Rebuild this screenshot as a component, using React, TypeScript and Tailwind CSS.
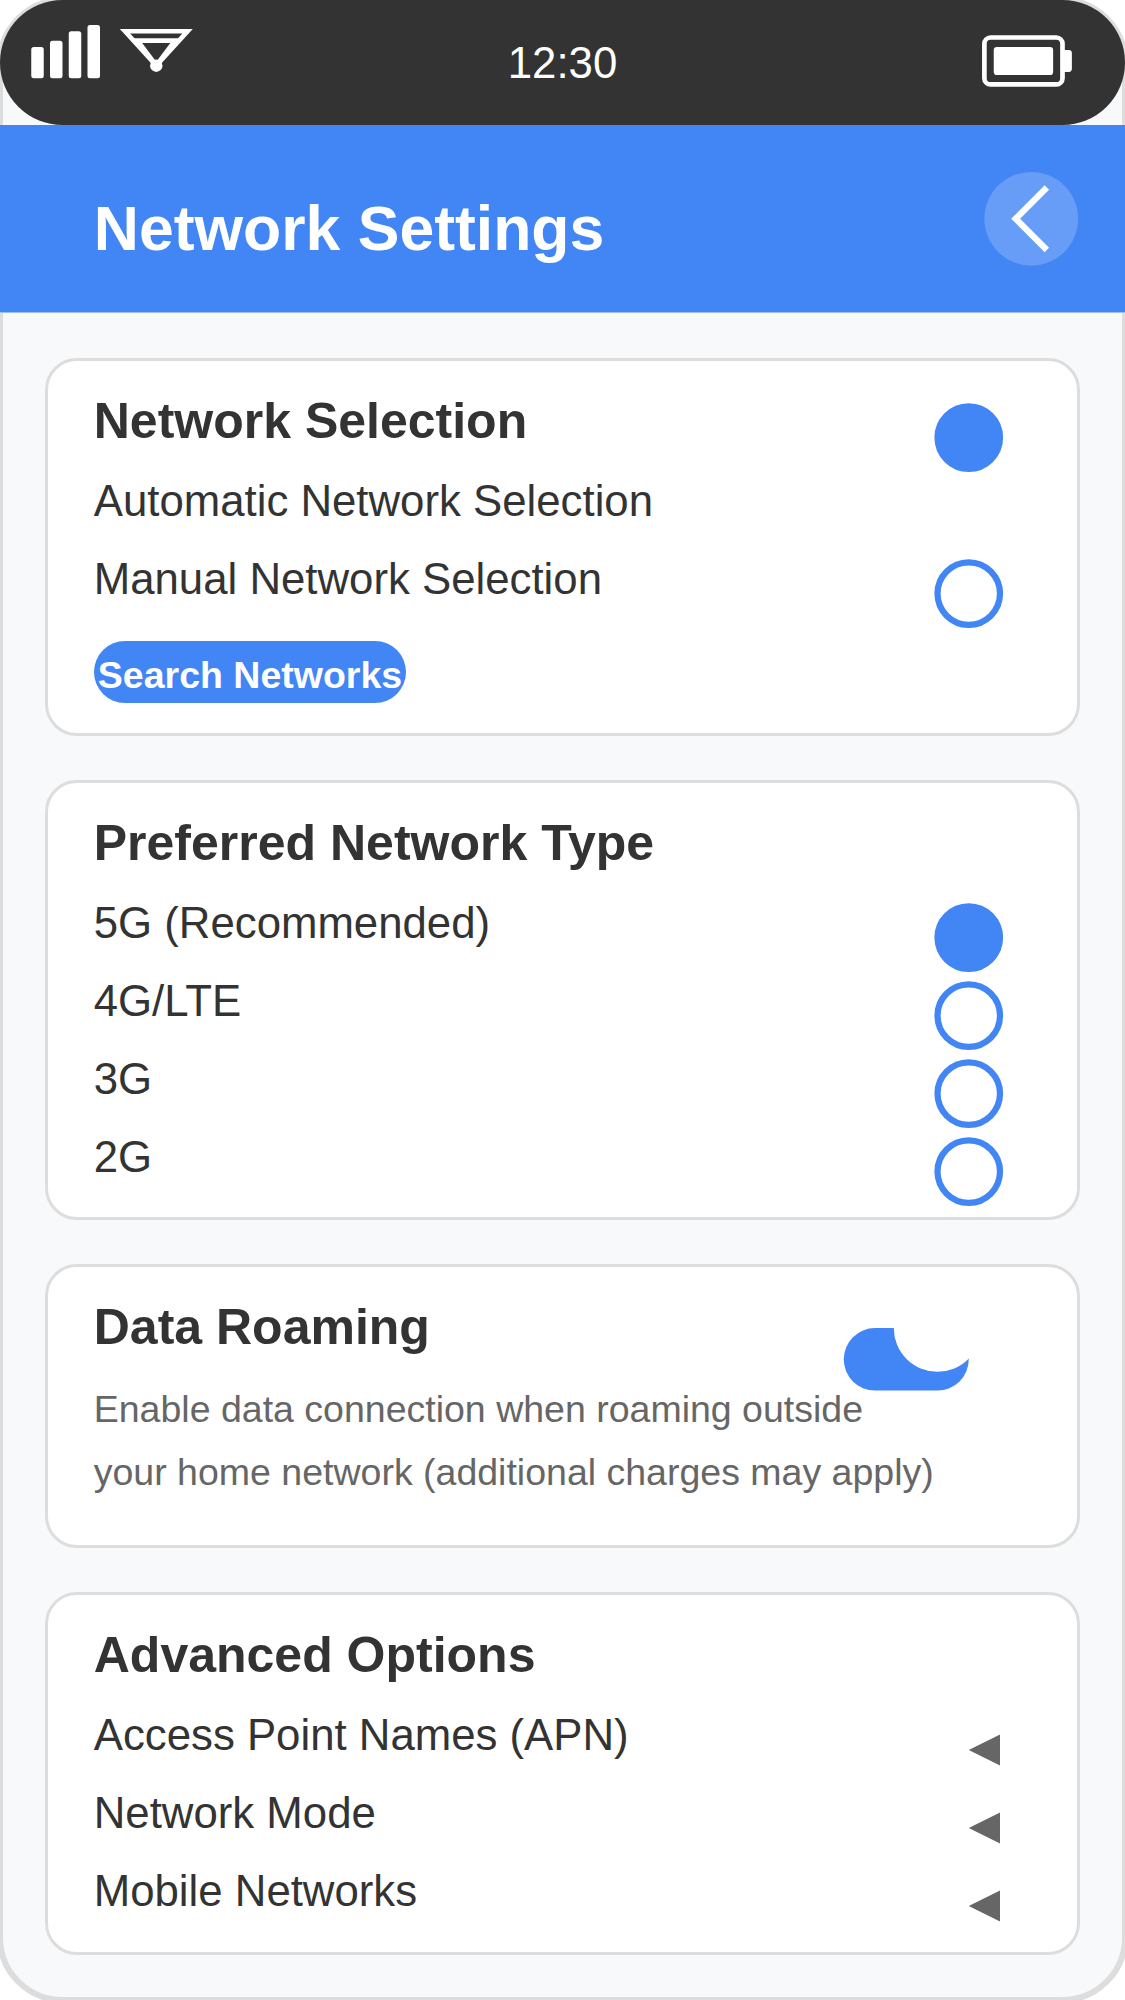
import type { ReactNode } from "react";

function StatusBar() {
  return (
    <div className="grid h-[125px] grid-cols-3 rounded-[62.5px] bg-[#333333] text-white">
      <svg className="h-[125px] w-[200px]" viewBox="0 0 64 40" fill="white" aria-label="Signal">
        <rect x="10" y="15" width="4" height="10" rx="0.8" />
        <rect x="16" y="13" width="4" height="12" rx="0.8" />
        <rect x="22" y="10" width="4" height="15" rx="0.8" />
        <rect x="28" y="8" width="4" height="17" rx="0.8" />
        <g fill="none" stroke="white" strokeWidth="1.5">
          <path d="M40 10 L50 21 L60 10 Z" />
          <path d="M44 13 L50 21 L56 13 Z" />
        </g>
        <circle cx="50" cy="21" r="2" />
      </svg>
      <span className="mt-[38px] text-center text-[43.75px] leading-[49px]">12:30</span>
      <svg
        className="h-[125px] w-[150px] justify-self-end"
        viewBox="312 0 48 40"
        fill="white"
        aria-label="Battery"
      >
        <rect x="315" y="12" width="25" height="15" rx="2" fill="none" stroke="white" strokeWidth="1.5" />
        <rect x="318" y="15" width="19" height="9" rx="1" />
        <rect x="340" y="16" width="3" height="7" rx="1" />
      </svg>
    </div>
  );
}

function Header() {
  return (
    <header className="flex h-[188px] items-start justify-between border-b border-[#9dbff7] bg-[#4285f4] pl-[93.75px] text-white">
      <h1 className="mt-[68px] text-[62.5px] font-bold leading-[70px]">Network Settings</h1>
      <button aria-label="Back">
        <svg className="block h-[175px] w-[150px]" viewBox="312 40 48 56">
          <circle cx="330" cy="70" r="15" fill="white" fillOpacity="0.2" />
          <path d="M335 60 L325 70 L335 80" fill="none" stroke="white" strokeWidth="2" />
        </svg>
      </button>
    </header>
  );
}

function Card({
  title,
  height,
  control,
  children,
}: {
  title: string;
  height: string;
  control?: ReactNode;
  children: ReactNode;
}) {
  return (
    <section
      className={`${height} rounded-[32px] border-[3px] border-[#dddddd] bg-white pl-[45.75px] pr-[73px] pt-[19px]`}
    >
      <div className="flex h-[81px] items-start justify-between">
        <h2 className="text-[50px] font-bold leading-[82.4px]">{title}</h2>
        {control}
      </div>
      {children}
    </section>
  );
}

function Radio({ checked = false }: { checked?: boolean }) {
  return (
    <svg className="h-[70px] w-[70px] shrink-0" viewBox="0 0 70 70">
      <circle
        cx="34.75"
        cy="34.6"
        r="31.25"
        fill={checked ? "#4285f4" : "white"}
        stroke="#4285f4"
        strokeWidth="6.25"
      />
    </svg>
  );
}

function Arrow() {
  return (
    <svg className="h-[32px] w-[32px] shrink-0" viewBox="0 0 32 32">
      <path d="M0.75 16 L32 0.4 V31.6 Z" fill="#666666" />
    </svg>
  );
}

function Row({ label, children }: { label: string; children?: ReactNode }) {
  return (
    <div className="flex h-[78.125px] items-start justify-between">
      <span className="whitespace-nowrap text-[43.75px] leading-[79.5px]">{label}</span>
      {children}
    </div>
  );
}

const networkTypes = ["5G (Recommended)", "4G/LTE", "3G", "2G"];
const advancedOptions = ["Access Point Names (APN)", "Network Mode", "Mobile Networks"];

export default function App() {
  return (
    <div className="relative h-[2000px] w-[1125px] overflow-hidden bg-white font-['Liberation_Sans',Arial,sans-serif] text-[#333333]">
      <div className="absolute -inset-[3px] rounded-[65.6px] border-[6px] border-[#dddddd] bg-[#f8f9fa]" />
      <div className="relative">
        <StatusBar />
        <Header />
        <main className="flex flex-col gap-[44px] px-[45px] pt-[45px]">
          <Card
            title="Network Selection"
            height="h-[378px]"
            control={
              <div className="mt-[23px]">
                <Radio checked />
              </div>
            }
          >
            <Row label="Automatic Network Selection" />
            <Row label="Manual Network Selection">
              <div className="mt-[20px]">
                <Radio />
              </div>
            </Row>
            <button className="mt-[23.4px] block h-[62.5px] w-[312.5px] whitespace-nowrap rounded-[31.25px] bg-[#4285f4] text-center text-[37.5px] font-bold leading-[69px] text-white">
              Search Networks
            </button>
          </Card>

          <Card title="Preferred Network Type" height="h-[440px]">
            {networkTypes.map((type, i) => (
              <Row key={type} label={type}>
                <div className="mt-[20px]">
                  <Radio checked={i === 0} />
                </div>
              </Row>
            ))}
          </Card>

          <Card
            title="Data Roaming"
            height="h-[284px]"
            control={
              <svg className="mr-[35px] mt-[42px] h-[63px] w-[126px] shrink-0" viewBox="0 0 126 63">
                <rect x="0.75" y="0.1" width="125" height="62.5" rx="31.25" fill="#4285f4" />
                <circle cx="94.5" cy="0" r="43.75" fill="white" />
              </svg>
            }
          >
            <p className="mt-[11px] whitespace-nowrap text-[37.5px] leading-[62.5px] text-[#666666]">
              Enable data connection when roaming outside
              <br />
              your home network (additional charges may apply)
            </p>
          </Card>

          <Card title="Advanced Options" height="h-[363px]">
            {advancedOptions.map((option) => (
              <Row key={option} label={option}>
                <div className="mr-[4px] mt-[39px]">
                  <Arrow />
                </div>
              </Row>
            ))}
          </Card>
        </main>
      </div>
    </div>
  );
}
